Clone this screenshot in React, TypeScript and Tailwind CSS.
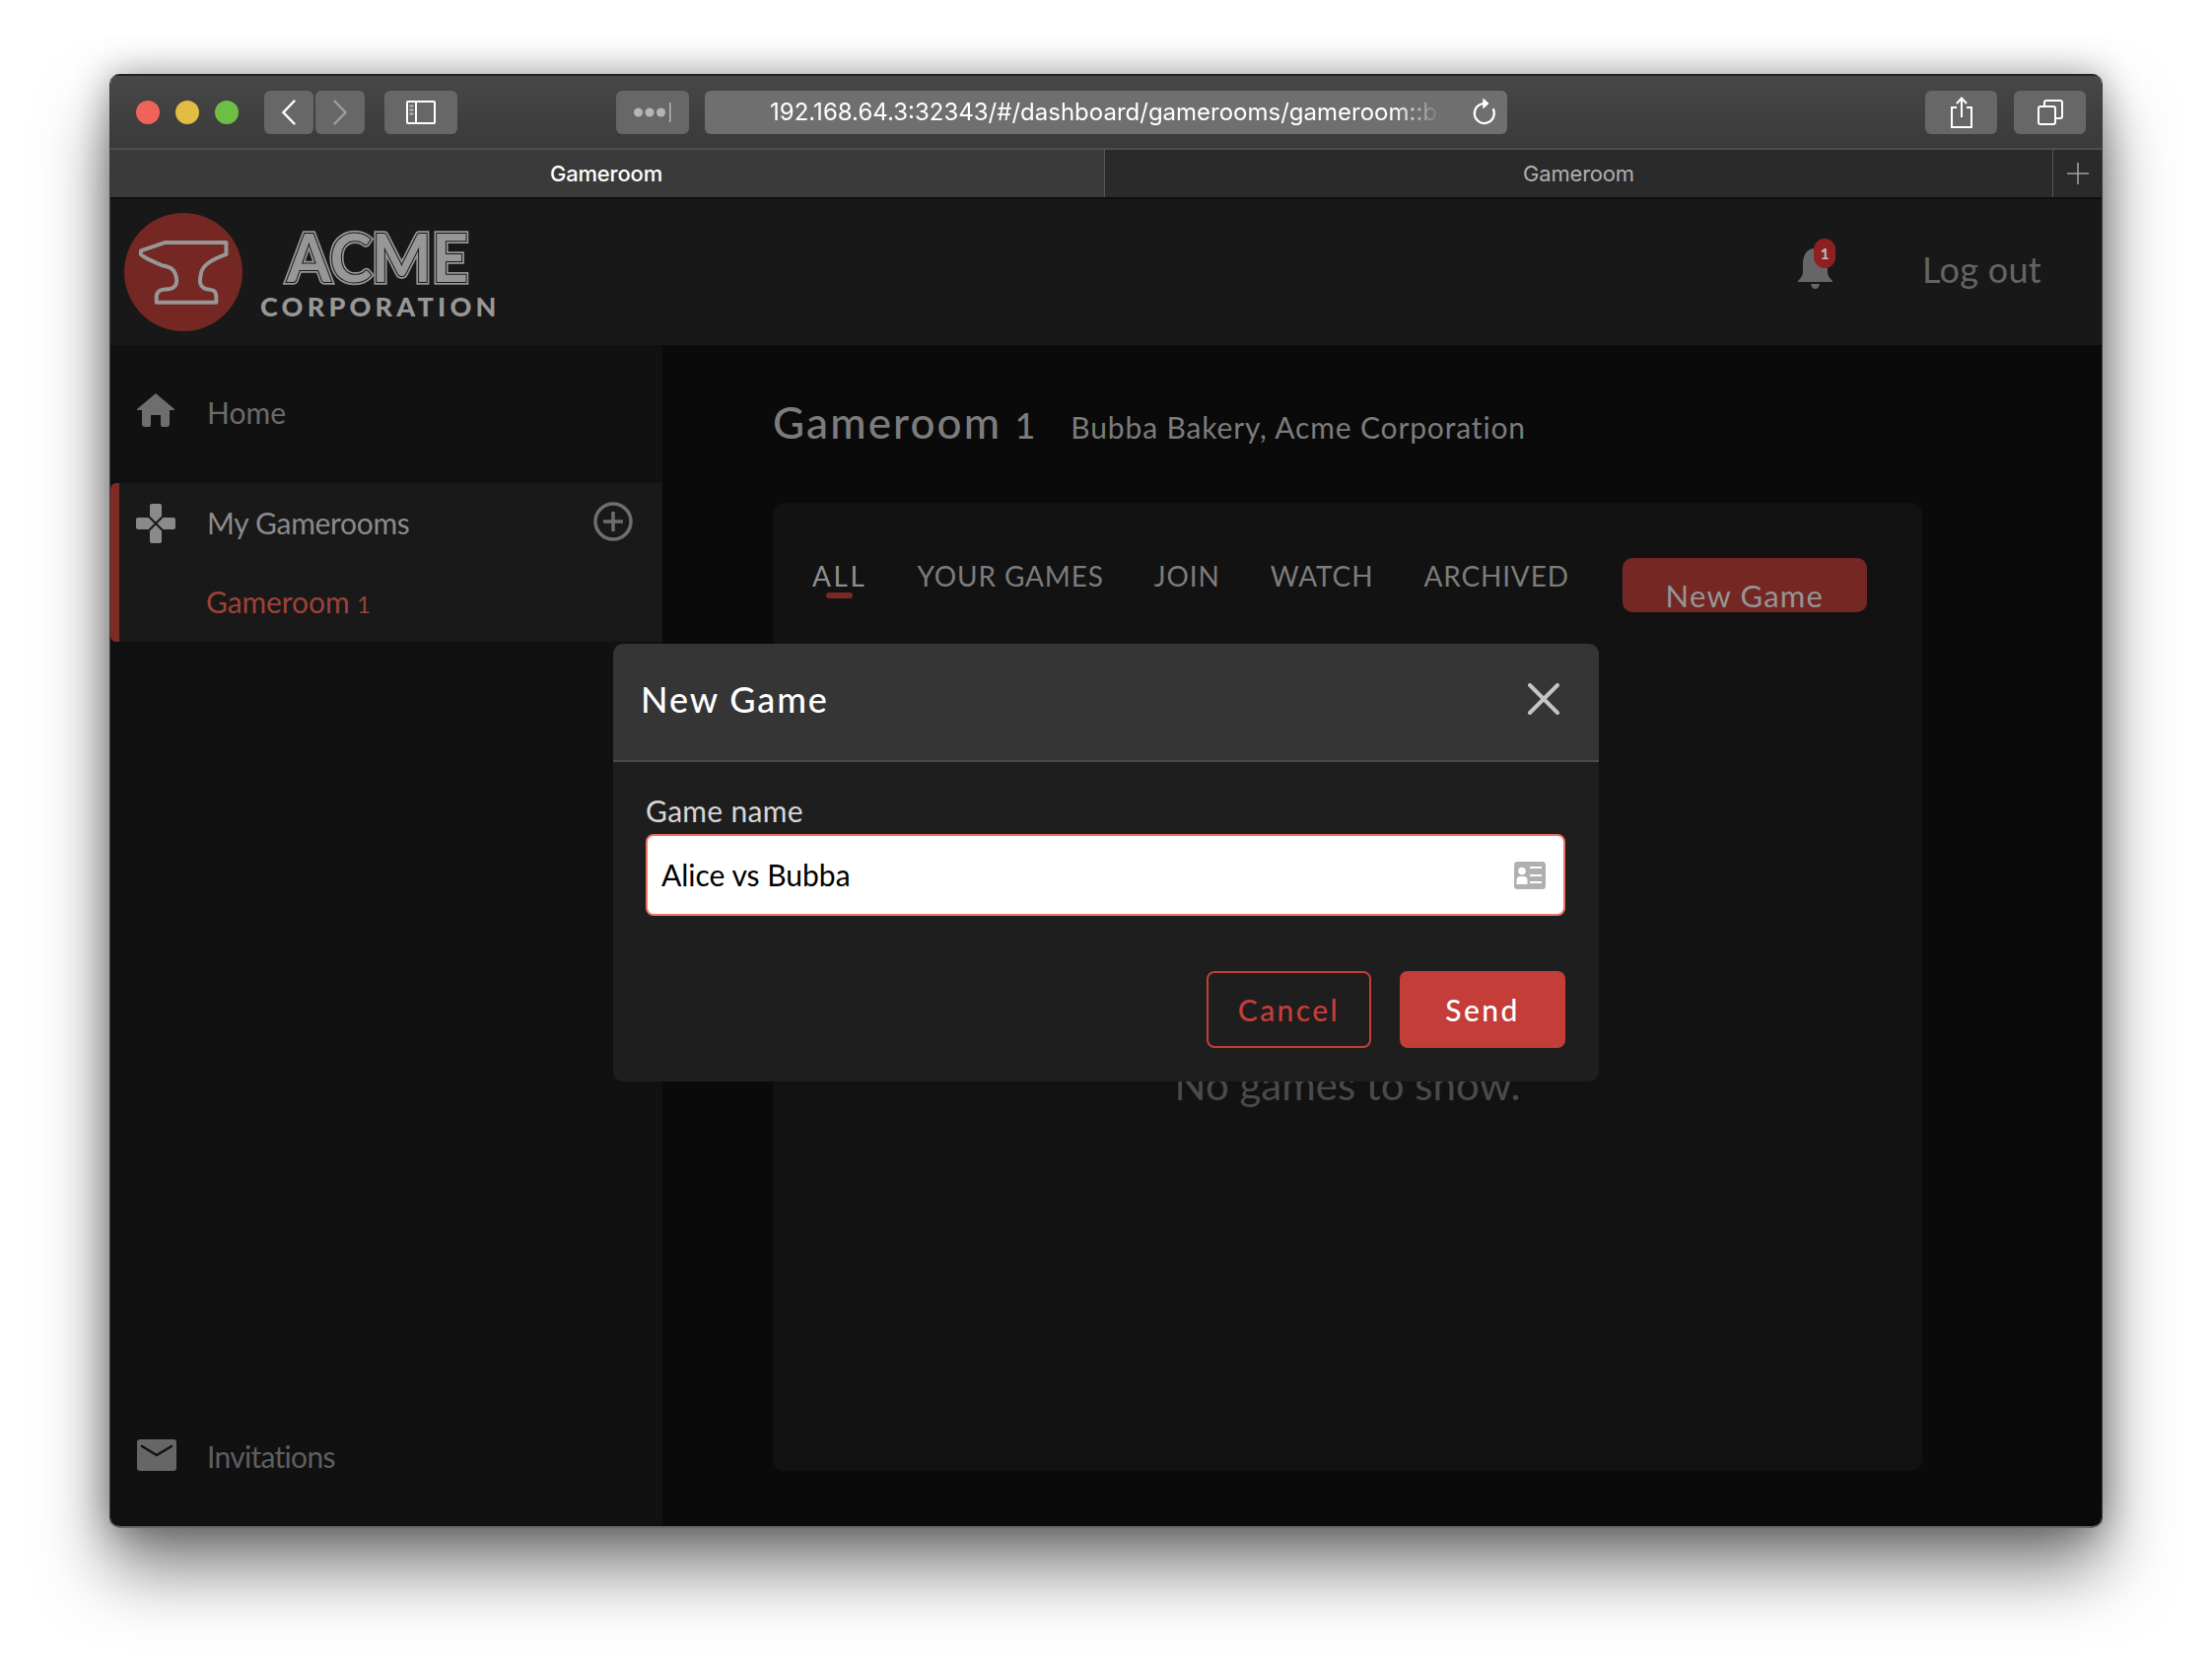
import React from "react";

const uiFont = "font-['Lato','Open_Sans',sans-serif]";

/* Safari toolbar button */
const ChromeButton: React.FC<{ className?: string; children: React.ReactNode }> = ({ className = "", children }) => (
  <div className={`h-[44px] rounded-[6px] bg-[#676767] flex items-center justify-center ${className}`}>{children}</div>
);

const AcmeLogo: React.FC = () => (
  <div className="flex items-start">
    <div className="w-[120px] h-[120px] rounded-full bg-[#752723] flex items-center justify-center">
      <svg width="92" height="68" viewBox="60 125 255 180" fill="none">
        <path
          d="M68 155 L135 132 L308 132 L308 165 C275 178 245 190 238 215 C232 240 232 255 250 262 L270 266 Q280 270 280 285 L280 300 L112 300 L112 285 Q112 268 130 264 L150 262 C170 258 172 240 165 220 C158 200 140 200 125 195 C105 185 85 180 68 165 Z"
          stroke="#979797"
          strokeWidth="11"
          strokeLinejoin="round"
        />
      </svg>
    </div>
    <div className="ml-[18px] mt-[18px] w-[245px] flex flex-col">
      <svg width="210" height="60" viewBox="0 0 210 60" className="ml-[24px] overflow-visible">
        <defs>
          <text id="acme-word" x="3" y="52" fontFamily="Lato" fontWeight="700" fontSize="66" textLength="184" lengthAdjust="spacingAndGlyphs">ACME</text>
        </defs>
        <use href="#acme-word" fill="#979797" stroke="#979797" strokeWidth="5.5" />
        <use href="#acme-word" fill="#181818" stroke="#181818" strokeWidth="2" />
        <use href="#acme-word" fill="#979797" />
      </svg>
      <span className="font-['Lato'] font-black text-[27px] leading-[27px] tracking-[4.2px] text-[#979797] mt-[3px] whitespace-nowrap">CORPORATION</span>
    </div>
  </div>
);

const Gamepad: React.FC = () => (
  <svg width="40" height="40" viewBox="0 0 40 40" fill="#8a8a8a">
    <path d="M14 2 Q14 0 16 0 H24 Q26 0 26 2 V12.5 L20 18.5 L14 12.5 Z" />
    <path d="M14 38 Q14 40 16 40 H24 Q26 40 26 38 V27.5 L20 21.5 L14 27.5 Z" />
    <path d="M2 14 Q0 14 0 16 V24 Q0 26 2 26 H12.5 L18.5 20 L12.5 14 Z" />
    <path d="M38 14 Q40 14 40 16 V24 Q40 26 38 26 H27.5 L21.5 20 L27.5 14 Z" />
  </svg>
);

const HomeIcon: React.FC = () => (
  <svg width="38" height="34" viewBox="0 0 38 34" fill="#6e6e6e">
    <path d="M19 0 L38 16 V17 H33 V31 Q33 34 30 34 H26 Q24 34 24 32 V22 H14 V32 Q14 34 12 34 H8 Q5 34 5 31 V17 H0 V16 Z" />
  </svg>
);

const BellIcon: React.FC = () => (
  <svg width="35" height="41" viewBox="0 0 35 41" fill="#666">
    <path d="M17.5 0 C8 0 5 8 5 16 V24 C5 28 2 31 0 33 V34 H35 V33 C33 31 30 28 30 24 V16 C30 8 27 0 17.5 0 Z" />
    <path d="M13 36 H22 Q21 41 17.5 41 Q14 41 13 36 Z" />
  </svg>
);

const EnvelopeIcon: React.FC = () => (
  <svg width="40" height="32" viewBox="0 0 40 32">
    <rect width="40" height="32" rx="3" fill="#666" />
    <path d="M5 7 L20 16 L35 7" fill="none" stroke="#111" strokeWidth="2.6" strokeLinecap="round" strokeLinejoin="round" />
  </svg>
);

const NameCardIcon: React.FC = () => (
  <svg width="32" height="28" viewBox="0 0 32 28">
    <rect width="32" height="28" rx="3.5" fill="#b0b0b0" />
    <circle cx="8" cy="9.5" r="3.8" fill="#fff" />
    <path d="M2.5 23 V19 Q2.5 15 6 15 H10 Q13.5 15 13.5 19 V23 Z" fill="#fff" />
    <path d="M16 6 H28 M16 14 H28 M16 21 H28" stroke="#fff" strokeWidth="2.2" />
  </svg>
);

const tabs = ["YOUR GAMES", "JOIN", "WATCH", "ARCHIVED"];

export default function App() {
  return (
    <div className={`w-[2244px] h-[1696px] bg-white pt-[75px] pl-[111px] overflow-hidden ${uiFont}`}>
      <div className="relative w-[2022px] h-[1475px] flex flex-col rounded-[10px] overflow-hidden border-b-[2px] border-b-[#666] border-x border-x-[#3c3c3c] shadow-[0_42px_70px_rgba(0,0,0,0.5),0_0_36px_rgba(0,0,0,0.35)]">
        {/* Toolbar */}
        <div className="h-[77px] shrink-0 flex items-center pl-[26px] pr-[16px] bg-gradient-to-b from-[#474747] to-[#3a3a3a] border-t-2 border-t-[#222] border-b-2 border-b-[#4d4d4d]">
          <div className="flex gap-[16px]">
            <span className="w-[24px] h-[24px] rounded-full bg-[#f0635a]" />
            <span className="w-[24px] h-[24px] rounded-full bg-[#e3bc45]" />
            <span className="w-[24px] h-[24px] rounded-full bg-[#6cbf43]" />
          </div>
          <div className="flex gap-[2px] ml-[26px]">
            <ChromeButton className="w-[50px]">
              <svg width="14" height="26" viewBox="0 0 14 26" fill="none" stroke="#fff" strokeWidth="2.4" strokeLinecap="round"><path d="M12.5 1.5 L1.5 13 L12.5 24.5" /></svg>
            </ChromeButton>
            <ChromeButton className="w-[50px]">
              <svg width="14" height="26" viewBox="0 0 14 26" fill="none" stroke="#9c9c9c" strokeWidth="2.4" strokeLinecap="round"><path d="M1.5 1.5 L12.5 13 L1.5 24.5" /></svg>
            </ChromeButton>
          </div>
          <ChromeButton className="w-[74px] ml-[20px]">
            <svg width="30" height="24" viewBox="0 0 30 24" fill="none" stroke="#fff" strokeWidth="2">
              <rect x="1" y="1" width="28" height="22" rx="1" />
              <path d="M10 1 V23" />
              <path d="M3.5 5.5 H7.5 M3.5 9.5 H7.5 M3.5 13.5 H7.5" stroke="#bbb" />
            </svg>
          </ChromeButton>
          <ChromeButton className="w-[74px] ml-[161px]">
            <svg width="38" height="22" viewBox="0 0 38 22" fill="#b5b5b5">
              <circle cx="4.5" cy="11" r="4.5" />
              <circle cx="16" cy="11" r="4.5" />
              <circle cx="27.5" cy="11" r="4.5" />
              <rect x="36" y="1" width="1.5" height="20" />
            </svg>
          </ChromeButton>
          {/* Address bar */}
          <div className="w-[814px] h-[44px] ml-[16px] rounded-[6px] bg-[#6f6f6f] flex items-center justify-between pl-[66px] pr-[10px]">
            <span className="font-['Inter'] text-[24px] leading-[44px] pt-[1px] text-white w-[681px] whitespace-nowrap overflow-hidden [mask-image:linear-gradient(to_right,black_93%,transparent)]">
              192.168.64.3:32343/#/dashboard/gamerooms/gameroom::bubba
            </span>
            <svg width="26" height="28" viewBox="0 0 26 28" fill="none" stroke="#fff" strokeWidth="2.2" strokeLinecap="round">
              <path d="M13 5 A10 10 0 1 0 22 11" />
              <path d="M12 0.5 L17 5 L12 9.5 Z" fill="#fff" strokeWidth="1" />
            </svg>
          </div>
          <ChromeButton className="w-[73px] ml-auto">
            <svg width="24" height="32" viewBox="0 0 24 32" fill="none" stroke="#fff" strokeWidth="2">
              <path d="M7 11 H2 V31 H22 V11 H17" />
              <path d="M12 21 V2 M7 7 L12 1.5 L17 7" />
            </svg>
          </ChromeButton>
          <ChromeButton className="w-[73px] ml-[17px]">
            <svg width="26" height="26" viewBox="0 0 26 26" fill="none" stroke="#fff" strokeWidth="2">
              <rect x="1" y="7" width="17" height="18" rx="2" />
              <path d="M7 7 V3 Q7 1 9 1 H23 Q25 1 25 3 V17 Q25 19 23 19 H18" />
            </svg>
          </ChromeButton>
        </div>

        {/* Tab strip */}
        <div className="h-[50px] shrink-0 flex border-b-2 border-b-[#0e0e0e] font-['Inter'] text-[22px] tracking-[-0.2px]">
          <div className="w-[1008px] bg-[#3a3a3a] text-white font-medium flex items-center justify-center pr-[2px]">Gameroom</div>
          <div className="flex-1 bg-[#2a2a2a] text-[#b0b0b0] flex items-center justify-center border-x border-x-[#565656]">Gameroom</div>
          <div className="w-[49px] bg-[#2a2a2a] flex items-center justify-center">
            <svg width="22" height="22" viewBox="0 0 22 22" stroke="#a0a0a0" strokeWidth="1.6"><path d="M11 0 V22 M0 11 H22" /></svg>
          </div>
        </div>

        {/* App header */}
        <div className="h-[148px] shrink-0 bg-[#181818] flex items-start pl-[14px] pr-[61px] pt-[14px]">
          <AcmeLogo />
          <div className="ml-auto flex items-center gap-[91px] h-[120px]">
            <div className="relative w-[35px] h-[41px] -mt-[8px]">
              <BellIcon />
              <span className="absolute -top-[10px] left-[16px] w-[22px] h-[30px] rounded-[11px] bg-[#8e2022] text-[#bdbdbd] text-[16px] font-bold flex items-center justify-center">1</span>
            </div>
            <span className="text-[36px] leading-[44px] text-[#646464] tracking-[0.3px] -mt-[7px]">Log out</span>
          </div>
        </div>

        <div className="flex-1 flex min-h-0">
          {/* Sidebar */}
          <aside className="w-[560px] shrink-0 bg-[#111] flex flex-col text-[30px] text-[#6b6b6b]">
            <div className="h-[140px] flex items-center pl-[27px] pb-[3px]">
              <span className="-mt-[6px]"><HomeIcon /></span>
              <span className="ml-[33px]">Home</span>
            </div>
            <div className="h-[161px] bg-[#191919] rounded-l-[6px] border-l-[9px] border-l-[#7f2a25] flex flex-col">
              <div className="flex items-center pl-[17px] pr-[30px] pt-[18px]">
                <Gamepad />
                <span className="ml-[32px] text-[#8a8a8a] tracking-[-0.3px]">My Gamerooms</span>
                <svg className="ml-auto -mt-[4px]" width="40" height="40" viewBox="0 0 40 40" fill="none" stroke="#6e6e6e" strokeWidth="3.5">
                  <circle cx="20" cy="20" r="18" />
                  <path d="M20 10 V30 M10 20 H30" />
                </svg>
              </div>
              <span className="ml-[88px] mt-[35px] text-[#9c4239] tracking-[-0.1px] leading-[45px]">
                Gameroom <span className="text-[24px]">1</span>
              </span>
            </div>
            <div className="mt-auto h-[70px] flex items-start pl-[27px] mb-[18px]">
              <EnvelopeIcon />
              <span className="ml-[31px] text-[#5f5f5f] -mt-[5px] tracking-[-0.7px]">Invitations</span>
            </div>
          </aside>

          {/* Main */}
          <main className="flex-1 bg-[#0a0a0a] pl-[112px] pr-[182px] flex flex-col">
            <div className="h-[160px] flex items-baseline pt-[50px]">
              <h1 className="text-[44px] leading-[56px] text-[#7c7c7c] tracking-[2.1px] font-medium">
                Gameroom <span className="text-[36px]">1</span>
              </h1>
              <span className="ml-[34px] text-[30px] text-[#7c7c7c] tracking-[0.85px]">Bubba Bakery, Acme Corporation</span>
            </div>
            <section className="h-[982px] bg-[#121212] rounded-[12px] flex flex-col">
              <div className="flex items-start pl-[40px] pt-[56px] text-[28px] leading-[36px] text-[#7c7c7c]">
                <div className="flex flex-col items-center">
                  <span className="text-[#8f8f8f] tracking-[2.6px]">ALL</span>
                  <span className="w-[27px] h-[6px] rounded-full bg-[#7a2824] mt-[-1px]" />
                </div>
                {tabs.map((t) => (
                  <span key={t} className="ml-[51px] tracking-[0.85px]">{t}</span>
                ))}
                <div className="ml-[54px] w-[248px] h-[55px] rounded-[10px] bg-[#752723] text-[#959595] text-[31px] leading-[33px] tracking-[1.2px] flex justify-center pt-[22px] overflow-hidden">New Game</div>
              </div>
              <p className="text-center text-[42px] leading-[50px] text-[#4a4a4a] mt-[454px]">No games to show.</p>
            </section>
          </main>
        </div>

        {/* New game modal */}
        <div className="absolute left-[510px] top-[578px] w-[1000px] h-[444px] rounded-[10px] overflow-hidden bg-[#1e1e1e] flex flex-col">
          <div className="h-[120px] shrink-0 bg-[#353535] border-b-2 border-b-[#4a4a4a] flex items-center justify-between pl-[28px] pr-[40px] pb-[6px]">
            <h2 className="text-[36px] text-white tracking-[1.9px] font-medium">New Game</h2>
            <svg width="32" height="32" viewBox="0 0 32 32" stroke="#c4c4c4" strokeWidth="4" strokeLinecap="round"><path d="M2 2 L30 30 M30 2 L2 30" /></svg>
          </div>
          <div className="flex-1 flex flex-col pl-[33px] pr-[34px] pt-[29px]">
            <label className="text-[30px] leading-[40px] text-[#d6d6d6] tracking-[0.3px]">Game name</label>
            <div className="mt-[4px] h-[83px] rounded-[8px] bg-white border-2 border-[#ec7468] flex items-center justify-between pl-[14px] pr-[18px]">
              <span className="text-[30px] text-black">Alice vs Bubba</span>
              <NameCardIcon />
            </div>
            <div className="flex justify-end gap-[29px] mt-[56px]">
              <button className="w-[167px] h-[78px] rounded-[8px] border-2 border-[#c43d39] text-[#c43d39] text-[30px] tracking-[2.4px] font-medium">Cancel</button>
              <button className="w-[168px] h-[78px] rounded-[8px] bg-[#c43d39] text-white text-[30px] tracking-[2.4px] font-medium">Send</button>
            </div>
          </div>
        </div>
      </div>
    </div>
  );
}
